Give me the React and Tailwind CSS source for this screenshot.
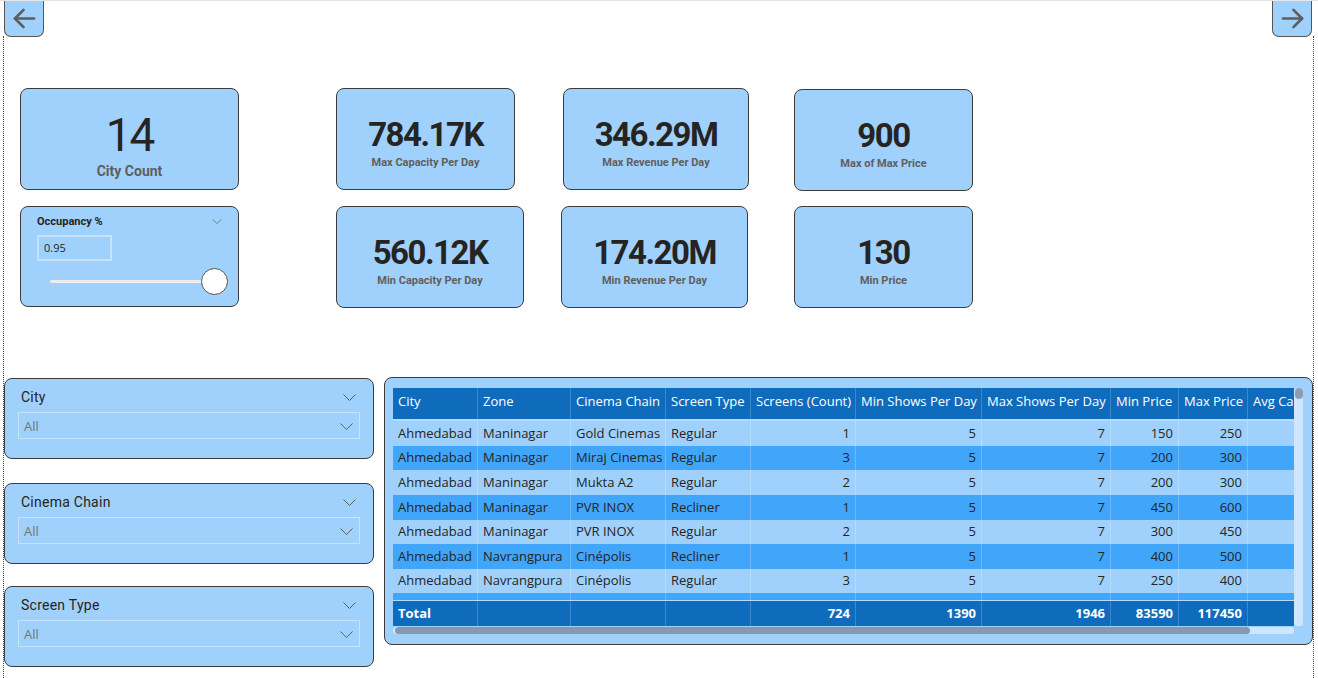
import React from 'react';

const NUM = { fontFamily: 'Roboto, "Liberation Sans", sans-serif' };
const UI = { fontFamily: '"Open Sans", "Noto Sans", sans-serif' };

const columns = [
    { label: 'City', w: 'w-[85px]' },
    { label: 'Zone', w: 'w-[93px]' },
    { label: 'Cinema Chain', w: 'w-[95px]' },
    { label: 'Screen Type', w: 'w-[85px]' },
    { label: 'Screens (Count)', w: 'w-[105px]', num: true },
    { label: 'Min Shows Per Day', w: 'w-[126px]', num: true },
    { label: 'Max Shows Per Day', w: 'w-[129px]', num: true },
    { label: 'Min Price', w: 'w-[68px]', num: true },
    { label: 'Max Price', w: 'w-[69px]', num: true },
    { label: 'Avg Capacity Per Day', w: 'w-[140px]', num: true },
];

const rows = [
    ['Ahmedabad', 'Maninagar', 'Gold Cinemas', 'Regular', 1, 5, 7, 150, 250, ''],
    ['Ahmedabad', 'Maninagar', 'Miraj Cinemas', 'Regular', 3, 5, 7, 200, 300, ''],
    ['Ahmedabad', 'Maninagar', 'Mukta A2', 'Regular', 2, 5, 7, 200, 300, ''],
    ['Ahmedabad', 'Maninagar', 'PVR INOX', 'Recliner', 1, 5, 7, 450, 600, ''],
    ['Ahmedabad', 'Maninagar', 'PVR INOX', 'Regular', 2, 5, 7, 300, 450, ''],
    ['Ahmedabad', 'Navrangpura', 'Cinépolis', 'Recliner', 1, 5, 7, 400, 500, ''],
    ['Ahmedabad', 'Navrangpura', 'Cinépolis', 'Regular', 3, 5, 7, 250, 400, ''],
];
const rowHeights = ['h-[25px]', 'h-[24px]', 'h-[25px]', 'h-[25px]', 'h-[24px]', 'h-[25px]', 'h-[24px]'];
const totals = ['Total', '', '', '', 724, 1390, 1946, 83590, 117450, ''];

function Chevron({ className = 'w-[13px] h-[7px]' }) {
    return (
        <svg viewBox="0 0 13 7" className={className} fill="none" stroke="#605e5c" strokeWidth="1">
            <path d="M0.5 0.5 L6.5 6.5 L12.5 0.5" />
        </svg>
    );
}

function ArrowButton({ dir }) {
    return (
        <div className="w-[40px] h-[36px] bg-[#a0d1fc] border border-t-0 border-[#555] rounded-b-[7px] flex items-center justify-center">
            <svg viewBox="0 0 24 22" className="w-[23px] h-[21px]" fill="none" stroke="#5f5e5c" strokeWidth="2.8" strokeLinecap="round" strokeLinejoin="round">
                {dir === 'left' ? (
                    <>
                        <path d="M2 11 H22" />
                        <path d="M11 2 L2 11 L11 20" />
                    </>
                ) : (
                    <>
                        <path d="M2 11 H22" />
                        <path d="M13 2 L22 11 L13 20" />
                    </>
                )}
            </svg>
        </div>
    );
}

function Kpi({ value, label, w, className = '' }) {
    return (
        <div className={`${w} h-[102px] bg-[#a0d1fc] border border-[#3c3c3c] rounded-[8px] flex flex-col items-center pt-[29px] ${className}`}>
            <div className="text-[33px] leading-[33px] font-bold tracking-[-1.5px] text-[#252423]" style={NUM}>{value}</div>
            <div className="mt-[5px] text-[11px] leading-[13px] font-bold text-[#605e5c]" style={NUM}>{label}</div>
        </div>
    );
}

function Slicer({ title }) {
    return (
        <div className="w-[370px] h-[81px] bg-[#a0d1fc] border border-[#3c3c3c] rounded-[8px] px-[13px] pt-[10px]">
            <div className="flex items-center justify-between pl-[3px] pr-[4px]">
                <span className="text-[14px] leading-[16px] tracking-[0.25px] text-[#252423]" style={NUM}>{title}</span>
                <Chevron />
            </div>
            <div className="mt-[7px] h-[27px] border border-[#c6e3fd] flex items-center justify-between pl-[5px] pr-[6px] pt-[2px]">
                <span className="text-[13px] text-[#737373]" style={UI}>All</span>
                <Chevron />
            </div>
        </div>
    );
}

export default function App() {
    return (
        <div className="w-[1318px] h-[678px] bg-white overflow-hidden border-t border-[#e6e6e6]">
            {/* top navigation */}
            <div className="flex justify-between pl-[4px] pr-[6px] h-[35px]">
                <ArrowButton dir="left" />
                <ArrowButton dir="right" />
            </div>

            <div className="ml-[3px] w-[1311px] h-[642px] border-x border-dotted border-[#444]">
                {/* KPI area */}
                <div className="flex pt-[52px] pl-[16px]">
                    <div className="flex flex-col gap-[16px]">
                        <div className="w-[219px] h-[102px] bg-[#a0d1fc] border border-[#3c3c3c] rounded-[8px] flex flex-col items-center pt-[23px]">
                            <div className="text-[46px] leading-[46px] tracking-[-2px] text-[#252423]" style={NUM}>14</div>
                            <div className="mt-[5px] text-[14px] leading-[16px] font-bold text-[#605e5c]" style={NUM}>City Count</div>
                        </div>
                        <div className="w-[219px] h-[101px] bg-[#a0d1fc] border border-[#3c3c3c] rounded-[8px] pl-[16px] pr-[16px] pt-[8px]">
                            <div className="flex items-center justify-between">
                                <span className="text-[11px] leading-[13px] font-bold text-[#252423]" style={NUM}>Occupancy %</span>
                                <Chevron className="w-[10px] h-[5px]" />
                            </div>
                            <div className="mt-[7px] w-[75px] h-[26px] border-2 border-[#c6e3fd] flex items-center pl-[5px]">
                                <span className="text-[11px] text-[#252423]" style={UI}>0.95</span>
                            </div>
                            <div className="relative mt-[19px] ml-[13px] w-[163px] h-[3px] bg-[#ececec] rounded-full">
                                <div className="absolute right-[-15px] top-[-12px] w-[27px] h-[27px] rounded-full bg-white border-[1.5px] border-[#555]" />
                            </div>
                        </div>
                    </div>

                    <div className="ml-[97px] flex flex-col gap-[16px]">
                        <Kpi value="784.17K" label="Max Capacity Per Day" w="w-[179px]" />
                        <Kpi value="560.12K" label="Min Capacity Per Day" w="w-[188px]" />
                    </div>

                    <div className="ml-[37px] flex flex-col gap-[16px]">
                        <Kpi value="346.29M" label="Max Revenue Per Day" w="w-[186px]" className="ml-[2px]" />
                        <Kpi value="174.20M" label="Min Revenue Per Day" w="w-[187px]" />
                    </div>

                    <div className="ml-[45px] flex flex-col gap-[15px] pt-[1px]">
                        <Kpi value="900" label="Max of Max Price" w="w-[179px]" />
                        <Kpi value="130" label="Min Price" w="w-[179px]" />
                    </div>
                </div>

                {/* filters + table */}
                <div className="flex mt-[69px]">
                    <div className="flex flex-col pt-[1px]">
                        <Slicer title="City" />
                        <div className="mt-[24px]"><Slicer title="Cinema Chain" /></div>
                        <div className="mt-[22px]"><Slicer title="Screen Type" /></div>
                    </div>

                    <div className="ml-[10px] w-[929px] h-[268px] bg-[#a0d1fc] border border-[#3c3c3c] rounded-[8px] pl-[8px] pt-[10px] flex" style={UI}>
                        <div className="w-[901px] flex flex-col">
                            <div className="w-[901px] overflow-hidden">
                                <div className="w-[1100px]">
                                    {/* header */}
                                    <div className="flex h-[31px] bg-[#0f6cbd] text-white text-[13px]">
                                        {columns.map((c, i) => (
                                            <div key={i} className={`${c.w} shrink-0 pl-[5px] pt-[3px] leading-[20px] whitespace-nowrap border-r border-[#3b87cc]`}>{c.label}</div>
                                        ))}
                                    </div>
                                    <div className="h-[2px] bg-[#b7dbfd]" />
                                    {rows.map((r, ri) => (
                                        <div key={ri} className={`flex ${rowHeights[ri]} text-[13px] text-[#252423] ${ri % 2 === 0 ? 'bg-[#a0d1fc]' : 'bg-[#41a5fa]'}`}>
                                            {columns.map((c, i) => (
                                                <div key={i} className={`${c.w} shrink-0 flex items-center whitespace-nowrap border-r ${ri % 2 === 0 ? 'border-[#b4dafc]' : 'border-[#6cb8fb]'} ${c.num ? 'justify-end pr-[5px]' : 'pl-[5px]'}`}>{r[i]}</div>
                                            ))}
                                        </div>
                                    ))}
                                    <div className="flex h-[7px] bg-[#41a5fa]">
                                        {columns.map((c, i) => (
                                            <div key={i} className={`${c.w} shrink-0 border-r border-[#6cb8fb]`} />
                                        ))}
                                    </div>
                                    <div className="h-px bg-[#b7dbfd]" />
                                    <div className="flex h-[25px] bg-[#0f6cbd] text-white text-[13px] font-bold">
                                        {columns.map((c, i) => (
                                            <div key={i} className={`${c.w} shrink-0 flex items-center whitespace-nowrap border-r border-[#3b87cc] ${c.num ? 'justify-end pr-[5px]' : 'pl-[5px]'}`}>{totals[i]}</div>
                                        ))}
                                    </div>
                                </div>
                            </div>
                            {/* horizontal scrollbar */}
                            <div className="mt-[1px] h-[7px] w-[901px] bg-[#cde6fd] rounded-[3px] pl-[2px]">
                                <div className="w-[855px] h-[7px] bg-[#8598ae] rounded-full" />
                            </div>
                        </div>
                        {/* vertical scrollbar */}
                        <div className="w-[9px] h-[238px] bg-[#cde6fd] rounded-[3px] flex justify-center">
                            <div className="w-[8px] h-[11px] bg-[#8c9db1] rounded-full" />
                        </div>
                    </div>
                </div>
            </div>
        </div>
    );
}
